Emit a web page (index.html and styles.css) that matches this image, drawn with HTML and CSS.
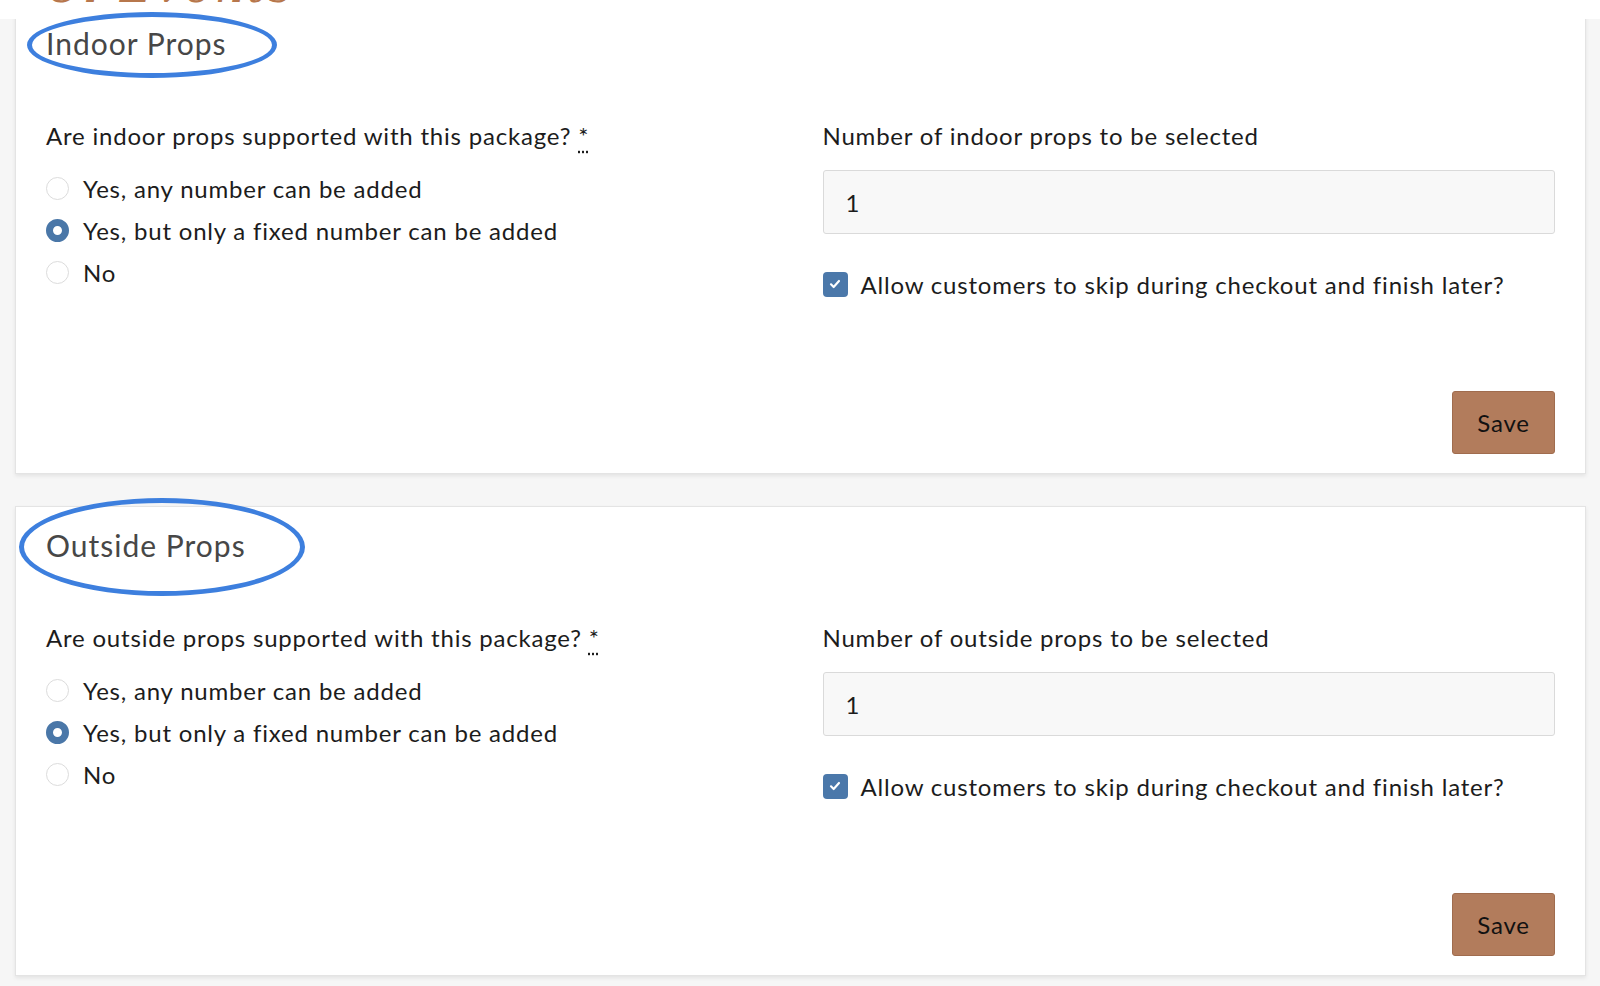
FILE: index.html
```html
<!DOCTYPE html>
<html lang="en">
<head>
    <meta charset="UTF-8">
    <meta name="viewport" content="width=device-width, initial-scale=1.0">
    <title>Package Props</title>
    <link rel="stylesheet" href="styles.css">
</head>
<body>
    <div class="topbar">
        <span class="brand">Ci Events</span>
    </div>

    <div class="page">
        <div class="card">
            <span class="ring ring-indoor"></span>
            <h2>Indoor Props</h2>
            <div class="fields">
                <div class="col">
                    <p class="question">Are indoor props supported with this package? <abbr title="required">*</abbr></p>
                    <label class="opt"><span class="radio"></span>Yes, any number can be added</label>
                    <label class="opt"><span class="radio on"></span>Yes, but only a fixed number can be added</label>
                    <label class="opt"><span class="radio"></span>No</label>
                </div>
                <div class="col">
                    <p class="question">Number of indoor props to be selected</p>
                    <div class="num">1</div>
                    <label class="check"><span class="box">
                        <svg viewBox="0 0 24 24" width="16" height="16"><path d="M6 12.5l4 4 8-9" fill="none" stroke="#fff" stroke-width="3.2" stroke-linecap="round" stroke-linejoin="round"/></svg>
                    </span>Allow customers to skip during checkout and finish later?</label>
                </div>
            </div>
            <div class="actions"><button class="bot">Save</button></div>
        </div>

        <div class="card">
            <span class="ring ring-outside"></span>
            <h2>Outside Props</h2>
            <div class="fields">
                <div class="col">
                    <p class="question">Are outside props supported with this package? <abbr title="required">*</abbr></p>
                    <label class="opt"><span class="radio"></span>Yes, any number can be added</label>
                    <label class="opt"><span class="radio on"></span>Yes, but only a fixed number can be added</label>
                    <label class="opt"><span class="radio"></span>No</label>
                </div>
                <div class="col">
                    <p class="question">Number of outside props to be selected</p>
                    <div class="num">1</div>
                    <label class="check"><span class="box">
                        <svg viewBox="0 0 24 24" width="16" height="16"><path d="M6 12.5l4 4 8-9" fill="none" stroke="#fff" stroke-width="3.2" stroke-linecap="round" stroke-linejoin="round"/></svg>
                    </span>Allow customers to skip during checkout and finish later?</label>
                </div>
            </div>
            <div class="actions"><button class="bot">Save</button></div>
        </div>
    </div>
</body>
</html>
```

FILE: styles.css
```css
body {
    margin: 0;
    padding: 0;
    background-color: #f6f6f6;
    font-family: Lato, "Open Sans", sans-serif;
    letter-spacing: 0.8px;
    color: #1c1c1c;
}

/* white header strip, page scrolls under it */
.topbar {
    position: fixed;
    top: 0;
    left: 0;
    right: 0;
    height: 19px;
    background: #fff;
    overflow: hidden;
    z-index: 1;
}
.brand {
    position: absolute;
    left: 46px;
    top: -39px;
    font-family: "DejaVu Serif", serif;
    font-style: italic;
    font-size: 44px;
    letter-spacing: 4px;
    color: #b7774c;
}

.page {
    padding: 4px 14px 10px 15px;
    display: flex;
    flex-direction: column;
    gap: 32px;
}

.card {
    position: relative;
    background: #fff;
    border: 1px solid #e4e4e4;
    box-shadow: 0 2px 4px rgba(0, 0, 0, 0.08);
    padding: 20px 30px 19px 30px;
}

.card h2 {
    margin: 0;
    font-size: 30px;
    line-height: 36px;
    font-weight: 400;
    letter-spacing: 1px;
    color: #474747;
}

/* hand drawn marker rings round the titles */
.ring {
    position: absolute;
    border: 5px solid #3d7fde;
    border-radius: 50%;
    z-index: 2;
    pointer-events: none;
}
.ring-indoor {
    left: 11px;
    top: 7px;
    width: 240px;
    height: 56px;
}
.ring-outside {
    left: 3px;
    top: -9px;
    width: 276px;
    height: 88px;
}

.fields {
    display: grid;
    grid-template-columns: 1fr 1fr;
    column-gap: 44px;
    margin-top: 60px;
}

.question {
    margin: 0 0 16px 0;
    font-size: 24px;
    line-height: 30px;
}
.question abbr {
    text-decoration: underline dotted;
    text-underline-offset: 6px;
}

.opt {
    display: flex;
    align-items: center;
    height: 42px;
    font-size: 24px;
}

.radio {
    width: 23px;
    height: 23px;
    border: 1px solid #dcdcdc;
    border-radius: 50%;
    background: #fff;
    margin-right: 14px;
    box-sizing: border-box;
}
.radio.on {
    border: 7px solid #4a77a8;
}

.num {
    margin-top: 19px;
    height: 64px;
    box-sizing: border-box;
    border: 1px solid #dadada;
    border-radius: 3px;
    background: #f8f8f8;
    padding: 0 22px;
    display: flex;
    align-items: center;
    font-size: 24px;
}

.check {
    display: flex;
    align-items: center;
    margin-top: 35px;
    height: 30px;
    font-size: 24px;
}
.box {
    width: 25px;
    height: 25px;
    border-radius: 4px;
    background: #4b78aa;
    display: flex;
    align-items: center;
    justify-content: center;
    margin-right: 13px;
}

.actions {
    display: flex;
    justify-content: flex-end;
    margin-top: 92px;
}
.bot {
    width: 103px;
    height: 63px;
    background-color: #b27c5c;
    border: 1px solid #a06c4e;
    border-radius: 3px;
    font-family: Lato, sans-serif;
    font-size: 24px;
    letter-spacing: 0.8px;
    color: #111;
}
```
